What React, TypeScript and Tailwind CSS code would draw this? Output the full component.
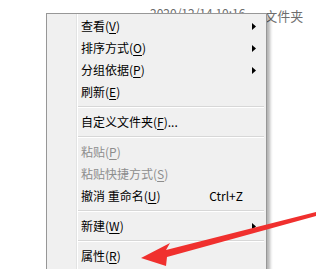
const font = { fontFamily: '"Noto Sans CJK SC", "Noto Sans", sans-serif' };

type Item =
  | { sep: true }
  | { label: string; key: string; tail?: string; sub?: boolean; disabled?: boolean; shortcut?: string };

const items: Item[] = [
  { label: "查看", key: "V", sub: true },
  { label: "排序方式", key: "O", sub: true },
  { label: "分组依据", key: "P", sub: true },
  { label: "刷新", key: "E" },
  { sep: true },
  { label: "自定义文件夹", key: "F", tail: "..." },
  { sep: true },
  { label: "粘贴", key: "P", disabled: true },
  { label: "粘贴快捷方式", key: "S", disabled: true },
  { label: "撤消 重命名", key: "U", shortcut: "Ctrl+Z" },
  { sep: true },
  { label: "新建", key: "W", sub: true },
  { sep: true },
  { label: "属性", key: "R" },
];

function SubArrow() {
  return (
    <svg width="4" height="7" viewBox="0 0 4 7" className="mr-[10px]">
      <path d="M0 0 L4 3.5 L0 7 Z" fill="#000" />
    </svg>
  );
}

function MenuRow({ item }: { item: Item }) {
  if ("sep" in item) {
    return (
      <div className="flex h-[8px] items-center pl-[31px] pr-[2px]">
        <div className="w-full border-t border-[#d7d7d7] border-b border-b-white" />
      </div>
    );
  }
  return (
    <div
      className={`flex h-[22px] items-center pl-[34px] text-[12px] leading-none ${
        item.disabled ? "text-[#8d8d8d]" : "text-black"
      }`}
    >
      <span className="flex-1">
        {item.label}(<span className="underline underline-offset-2">{item.key}</span>){item.tail}
      </span>
      {item.shortcut && <span className="mr-[23px]">{item.shortcut}</span>}
      {item.sub && <SubArrow />}
    </div>
  );
}

export default function App() {
  return (
    <div className="relative h-[269px] w-[316px] overflow-hidden bg-white" style={font}>
      <div className="flex items-start pt-[7px] text-[12px] leading-none text-[#6d6d6d]">
        <span className="ml-[150px]">2020/12/14 10:16</span>
        <span className="ml-[19px] pt-[2px] text-[13px]">文件夹</span>
      </div>

      <div className="absolute left-[46px] top-[13px] flex w-[221px] border border-[#979797] bg-[#f0f0f0] shadow-[3px_3px_3px_rgba(0,0,0,0.3)]">
        <div className="w-[29px] shrink-0" />
        <div className="w-[2px] shrink-0 border-l border-[#e2e3e3] border-r border-r-white" />
        <div className="-ml-[31px] flex flex-1 flex-col pb-[2px] pt-[1px]">
          {items.map((it, i) => (
            <MenuRow key={i} item={it} />
          ))}
        </div>
      </div>

      <svg width="316" height="269" className="absolute left-0 top-0">
        <polygon
          points="141,258 170,243 166,250 316,212 316,216 167,257 166,266"
          fill="#f0302e"
        />
      </svg>
    </div>
  );
}
